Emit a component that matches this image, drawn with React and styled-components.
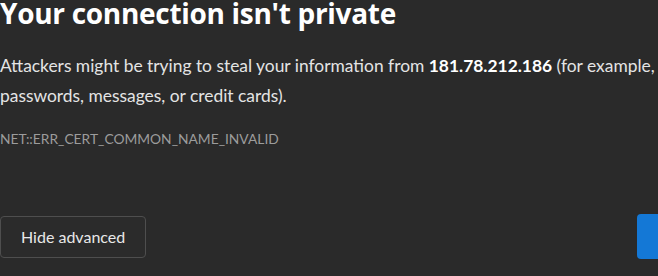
import React from "react";
import styled, { createGlobalStyle } from "styled-components";

const Global = createGlobalStyle`
  html, body { margin: 0; padding: 0; background: #2a2a2a; overflow: hidden; }
  body { font-family: "Lato", "Open Sans", sans-serif; }
`;

const Page = styled.div`
  width: 760px;
  height: 276px;
  background: #2a2a2a;
  color: #e6e6e6;
  display: flex;
  flex-direction: column;
  box-sizing: border-box;
`;

const Title = styled.h1`
  margin: 0;
  font-family: "Open Sans", sans-serif;
  font-size: 28px;
  line-height: 26px;
  font-weight: 700;
  color: #ffffff;
  letter-spacing: -0.3px;
`;

const Body = styled.p`
  margin: 25px 0 0 0;
  max-width: 680px;
  font-size: 17.4px;
  line-height: 30px;
  color: #e4e4e4;
  strong { font-weight: 700; color: #ffffff; }
`;

const Code = styled.div`
  margin-top: 19px;
  font-size: 13.8px;
  line-height: 18px;
  color: #9c9c9c;
`;

const Actions = styled.div`
  margin-top: 66px;
  display: flex;
  align-items: center;
  justify-content: space-between;
`;

const SecondaryButton = styled.button`
  height: 42px;
  padding: 0 20px;
  background: #2b2b2b;
  border: 1px solid #4e4e4e;
  border-radius: 4px;
  color: #e8e8e8;
  font-family: "Lato", sans-serif;
  font-size: 16px;
`;

const PrimaryButton = styled.button`
  width: 123px;
  height: 45px;
  background: #1478d6;
  border: none;
  border-radius: 4px;
`;

export default function App() {
  return (
    <>
      <Global />
      <Page>
        <Title>Your connection isn't private</Title>
        <Body>
          Attackers might be trying to steal your information from{" "}
          <strong>181.78.212.186</strong> (for example, passwords, messages, or
          credit cards).
        </Body>
        <Code>NET::ERR_CERT_COMMON_NAME_INVALID</Code>
        <Actions>
          <SecondaryButton>Hide advanced</SecondaryButton>
          <PrimaryButton aria-label="Go back" />
        </Actions>
      </Page>
    </>
  );
}
